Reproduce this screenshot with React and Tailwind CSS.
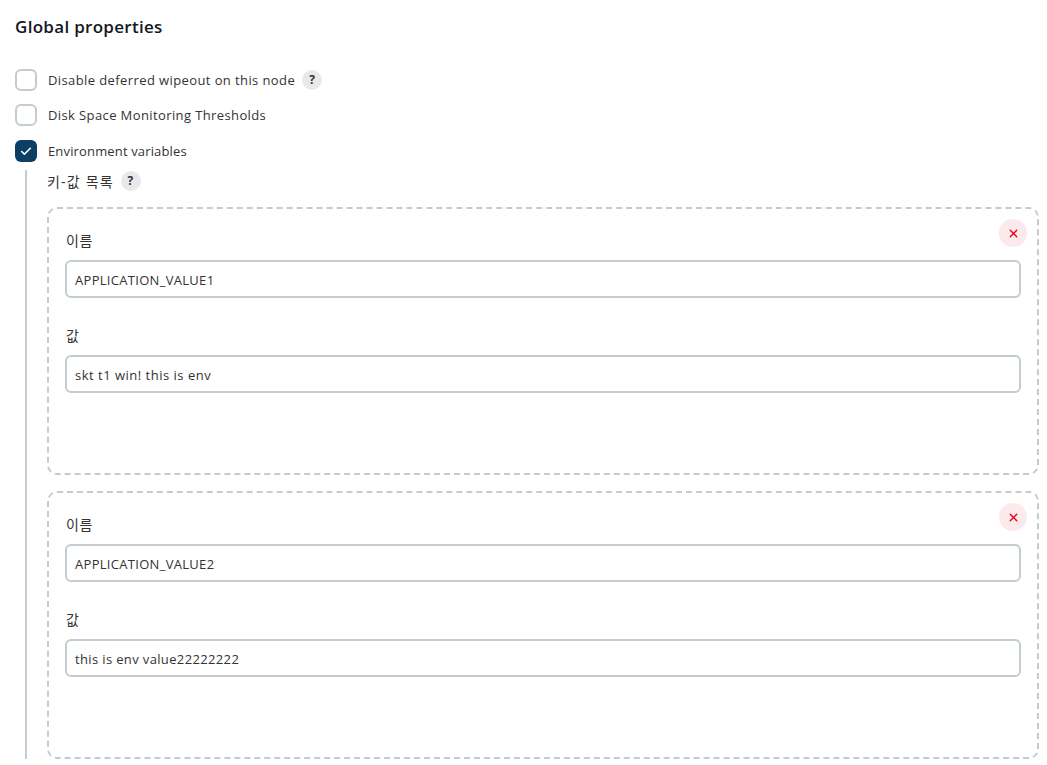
import React from 'react';
import { Check, X } from 'lucide-react';

const font = "font-['Open_Sans','Noto_Sans_CJK_KR',sans-serif]";

const HelpBadge = () => (
  <span className="ml-[7px] flex h-[20px] w-[20px] items-center justify-center rounded-full bg-[#e9e9ea] text-[12px] font-bold text-[#2b3544]">?</span>
);

const CheckRow = ({ label, checked, help, className, textClass }) => (
  <div className={`flex h-[22px] items-center ${className}`}>
    {checked ? (
      <span className="flex h-[22px] w-[22px] items-center justify-center rounded-[6px] bg-[#0b3f63]">
        <Check className="h-[13px] w-[13px] -translate-x-[0.5px] text-white" strokeWidth={3} />
      </span>
    ) : (
      <span className="h-[22px] w-[22px] rounded-[6px] border-2 border-[#c3ccd1] bg-white" />
    )}
    <span className={`ml-[11px] text-[13px] leading-[22px] text-[#333] ${textClass}`}>{label}</span>
    {help && <HelpBadge />}
  </div>
);

const Field = ({ label, value, className, textClass }) => (
  <div className={className}>
    <div className="h-[20px] pl-px text-[14px] leading-[20px] tracking-[0.5px] text-[#333]">{label}</div>
    <div className={`mt-[9px] flex h-[38px] items-center rounded-[6px] border-2 border-[#c3ccd1] bg-white px-[8px] pt-[4px] text-[13px] text-[#333] ${textClass}`}>
      {value}
    </div>
  </div>
);

const EnvCard = ({ name, value, className, nameClass, valueClass }) => (
  <div className={`relative h-[268px] rounded-[10px] border-2 border-dashed border-[#c3ccd1] px-[16px] pt-[22px] ${className}`}>
    <button className="absolute right-[10px] top-[10px] flex h-[28px] w-[28px] items-center justify-center rounded-full bg-[#fbe9eb]">
      <X className="h-[13px] w-[13px] text-[#e6001f]" strokeWidth={2.5} />
    </button>
    <Field label="이름" value={name} textClass={nameClass} />
    <Field label="값" value={value} textClass={valueClass} className="mt-[28px]" />
  </div>
);

export default function App() {
  return (
    <div className={`h-[765px] w-[1047px] overflow-hidden bg-white pl-[15px] pr-[8px] ${font}`}>
      <h2 className="pt-[15px] text-[17px] font-semibold leading-[24px] tracking-[0.3px] text-[#14171f]">Global properties</h2>
      <CheckRow label="Disable deferred wipeout on this node" help className="mt-[30px]" textClass="tracking-[0.4px]" />
      <CheckRow label="Disk Space Monitoring Thresholds" className="mt-[13px]" textClass="tracking-[0.39px]" />
      <CheckRow label="Environment variables" checked className="mt-[14px]" textClass="tracking-[0.15px]" />
      <div className="ml-[10px] mt-[8px] border-l-2 border-[#c3ccd1] pl-[20px]">
        <div className="flex h-[22px] items-center text-[14px] tracking-[1.2px] text-[#333]">
          키-값 목록
          <HelpBadge />
        </div>
        <EnvCard name="APPLICATION_VALUE1" value="skt t1 win! this is env" className="mt-[15px]" nameClass="tracking-[0.3px]" valueClass="tracking-[0.5px]" />
        <EnvCard name="APPLICATION_VALUE2" value="this is env value22222222" className="mt-[16px]" nameClass="tracking-[0.3px]" valueClass="tracking-[0.36px]" />
      </div>
    </div>
  );
}
